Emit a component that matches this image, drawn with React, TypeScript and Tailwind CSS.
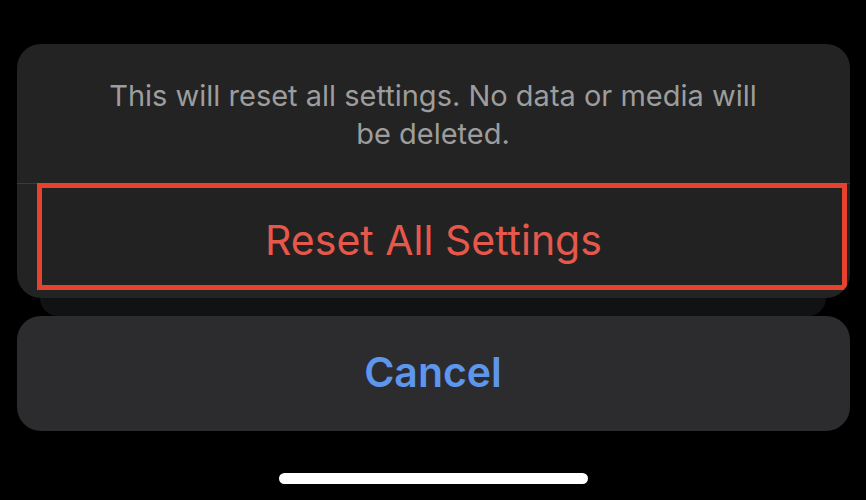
export default function App() {
  return (
    <div
      className="flex h-[500px] w-[866px] flex-col items-center bg-black"
      style={{ fontFamily: "Inter, 'Noto Sans', sans-serif" }}
    >
      <div className="mt-[44px] w-[833px] overflow-hidden rounded-[24px] bg-[#232323]">
        <div className="flex h-[139px] items-center justify-center px-[30px] pt-[2px] text-center text-[29px] leading-[38px] text-[#9d9d9d]">
          <p>
            This will reset all settings. No data or media will
            <br />
            be deleted.
          </p>
        </div>
        <div className="h-px bg-[#3a3a3a]" />
        <div className="flex h-[114px] pb-[8px] pl-[20px] pr-[3px] pt-0">
          <div className="-mt-px flex flex-1 items-center justify-center border-[5px] border-[#e5432d] bg-[#222222] pt-[8px] pr-[16px] text-[41px] text-[#e6584c]">
            Reset All Settings
          </div>
        </div>
      </div>
      <div className="h-[18px] w-[786px] rounded-b-[18px] bg-[#111214]" />
      <div className="flex h-[115px] w-[833px] items-center justify-center rounded-[24px] bg-[#2c2c2e] pb-[2px] text-[41px] font-semibold text-[#5e96ee]">
        Cancel
      </div>
      <div className="mt-[42px] h-[11px] w-[309px] rounded-full bg-white" />
    </div>
  );
}
